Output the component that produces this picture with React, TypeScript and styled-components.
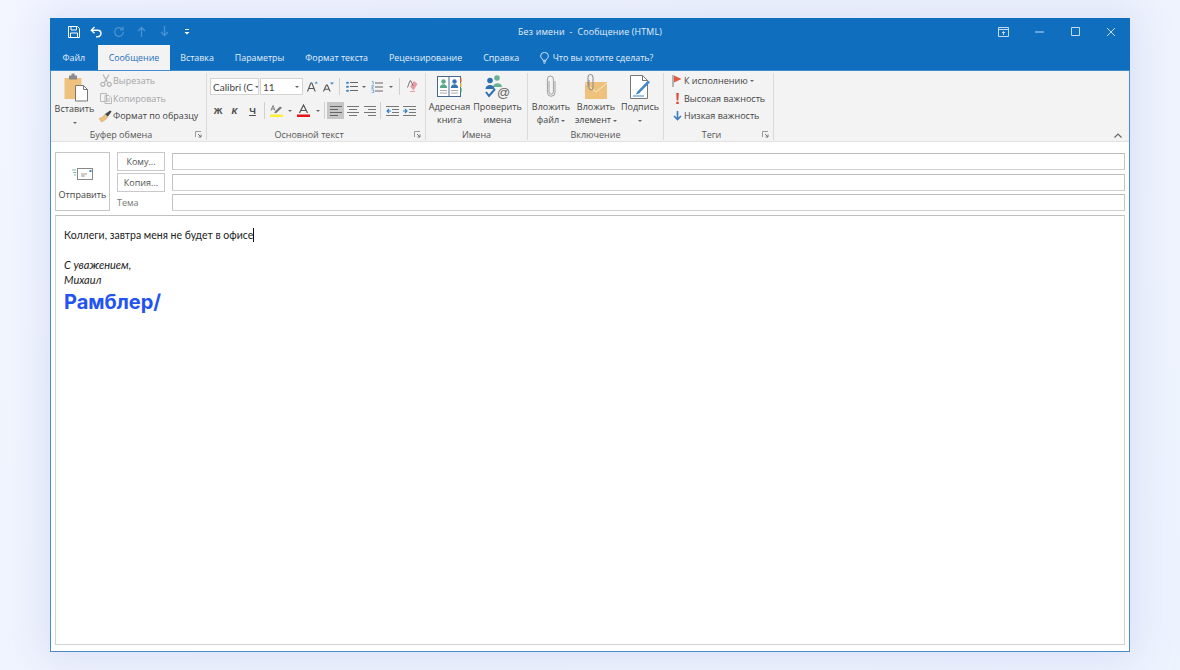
import React from "react";
import styled, { createGlobalStyle } from "styled-components";

const GlobalStyle = createGlobalStyle`
  html, body {
    margin: 0;
    padding: 0;
    height: 100%;
    background: #f0f4fe;
  }
  #root {
    height: 100%;
  }
`;

const Page = styled.div`
  width: 1180px;
  height: 670px;
  padding: 18px 50px;
  box-sizing: border-box;
  overflow: hidden;
  background: linear-gradient(135deg, #f3f6ff 0%, #eff3fd 50%, #eef3fe 100%);
  font-family: "Open Sans", "Noto Sans", sans-serif;
  font-size: 9px;
  color: #444;
`;

const Window = styled.div`
  width: 1080px;
  height: 634px;
  box-sizing: border-box;
  display: flex;
  flex-direction: column;
  background: #fff;
  border: 1px solid #4a8cc8;
  border-top: 0;
  box-shadow: 0 0 34px 6px rgba(205, 212, 244, 0.62);
`;

const TitleBar = styled.div`
  height: 27px;
  margin: 0 -1px;
  display: grid;
  grid-template-columns: 1fr auto 1fr;
  align-items: center;
  background: #106ebe;
  color: #e6f0fa;
`;

const Qat = styled.div`
  display: flex;
  align-items: center;
  padding-left: 12px;
`;

const QatBtn = styled.div<{ $w: number; $dim?: boolean }>`
  width: ${(p) => p.$w}px;
  height: 27px;
  display: flex;
  align-items: center;
  justify-content: center;
  color: ${(p) => (p.$dim ? "#4a92d2" : "#fff")};
`;

const WindowTitle = styled.div`
  font-size: 8.8px;
  white-space: pre;
  letter-spacing: 0.02em;
`;

const Controls = styled.div`
  display: flex;
  justify-content: flex-end;
  padding-right: 1px;
`;

const ControlBtn = styled.div`
  width: 36px;
  height: 27px;
  display: flex;
  align-items: center;
  justify-content: center;
  color: #c4dcf2;
`;

const TabRow = styled.div`
  height: 25px;
  margin: 0 -1px;
  padding-left: 2px;
  display: flex;
  background: #106ebe;
  font-size: 8.85px;
`;

const Tab = styled.div<{ $active?: boolean }>`
  padding: 0 10.5px;
  display: flex;
  align-items: center;
  white-space: nowrap;
  color: ${(p) => (p.$active ? "#1f6fb8" : "#e3eefa")};
  background: ${(p) => (p.$active ? "#f3f3f3" : "transparent")};
`;

const FileTab = styled(Tab)`
  padding-right: 13px;
`;

const TellMe = styled.div`
  margin-left: 10px;
  display: flex;
  align-items: center;
  gap: 4px;
  color: #e3eefa;
  white-space: nowrap;
`;

const Ribbon = styled.div`
  height: 72px;
  flex: none;
  display: flex;
  box-sizing: border-box;
  background: #f3f3f3;
  border-bottom: 1px solid #e2e2e2;
  border-top: 1px solid #3f8ccc;
  position: relative;
`;

const Group = styled.div<{ $w: number }>`
  width: ${(p) => p.$w}px;
  flex: none;
  box-sizing: border-box;
  display: flex;
  flex-direction: column;
  position: relative;
  margin: 2px 0 1px;
  border-right: 1px solid #dadada;
`;

const GroupBody = styled.div`
  flex: 1;
  display: flex;
  min-height: 0;
`;

const GroupLabel = styled.div<{ $pr?: number }>`
  height: 14px;
  line-height: 17px;
  padding-right: ${(p) => p.$pr ?? 0}px;
  text-align: center;
  color: #555;
  flex: none;
`;

const Launcher = styled.svg`
  position: absolute;
  right: 4px;
  bottom: 2px;
`;

const LargeBtn = styled.div<{ $w: number }>`
  width: ${(p) => p.$w}px;
  flex: none;
  display: flex;
  flex-direction: column;
  align-items: center;
  text-align: center;
  line-height: 13px;
  white-space: nowrap;
`;

const LargeIcon = styled.div`
  height: 28px;
  width: 100%;
  display: flex;
  align-items: center;
  justify-content: center;
`;

const PasteIcon = styled(LargeIcon)`
  height: 34px;
  padding-left: 2px;
  box-sizing: border-box;
`;

const Caret = styled.span<{ $left?: number }>`
  display: inline-block;
  width: 0;
  height: 0;
  margin-left: ${(p) => p.$left ?? 2}px;
  vertical-align: middle;
  border-left: 2px solid transparent;
  border-right: 2px solid transparent;
  border-top: 2px solid #666;
`;

const SmallCol = styled.div`
  display: flex;
  flex-direction: column;
  margin-top: -1px;
`;

const TagsCol = styled(SmallCol)`
  padding-left: 6px;
`;

const SmallBtn = styled.div<{ $dim?: boolean }>`
  height: 17.5px;
  display: flex;
  align-items: center;
  white-space: nowrap;
  color: ${(p) => (p.$dim ? "#a6a6a6" : "#444")};
`;

const SmallIcon = styled.div<{ $w: number }>`
  width: ${(p) => p.$w}px;
  height: 16px;
  flex: none;
  display: flex;
  align-items: center;
  justify-content: center;
`;

const FontCol = styled.div`
  display: flex;
  flex-direction: column;
  gap: 7px;
  padding: 5px 0 0 3px;
`;

const ToolRow = styled.div`
  height: 17px;
  display: flex;
  align-items: center;
`;

const Combo = styled.div<{ $w: number }>`
  width: ${(p) => p.$w}px;
  height: 17px;
  box-sizing: border-box;
  margin-right: 1px;
  padding: 0 3px 0 2px;
  display: flex;
  align-items: center;
  justify-content: space-between;
  background: #fff;
  border: 1px solid #d4d4d4;
  font-family: "Lato", sans-serif;
  font-size: 10px;
  overflow: hidden;
  white-space: nowrap;
`;

const Tool = styled.div<{ $w: number; $active?: boolean }>`
  width: ${(p) => p.$w}px;
  height: 17px;
  flex: none;
  display: flex;
  align-items: center;
  justify-content: center;
  background: ${(p) => (p.$active ? "#c6c6c6" : "transparent")};
  color: #444;
`;

const ToolSep = styled.div<{ $mx: number }>`
  width: 1px;
  height: 17px;
  flex: none;
  margin: 0 ${(p) => p.$mx}px;
  background: #d0d0d0;
`;

const BoldLetter = styled.span<{ $italic?: boolean; $under?: boolean }>`
  font-family: "Liberation Sans", sans-serif;
  font-size: 9.5px;
  font-weight: 700;
  font-style: ${(p) => (p.$italic ? "italic" : "normal")};
  text-decoration: ${(p) => (p.$under ? "underline" : "none")};
  color: #4a4a4a;
`;

const CollapseBtn = styled.svg`
  position: absolute;
  right: 7px;
  bottom: 3px;
`;

const Compose = styled.div`
  flex: 1;
  display: flex;
  flex-direction: column;
  padding: 10px 4px 6px;
  min-height: 0;
`;

const Header = styled.div`
  display: flex;
  align-items: flex-start;
`;

const SendBtn = styled.div`
  width: 55px;
  height: 59px;
  box-sizing: border-box;
  flex: none;
  display: flex;
  flex-direction: column;
  align-items: center;
  border: 1px solid #c6c6c6;
  color: #444;
`;

const SendIcon = styled.div`
  height: 29px;
  margin-top: 6px;
  display: flex;
  align-items: center;
`;

const Fields = styled.div`
  flex: 1;
  margin-left: 7px;
  display: grid;
  grid-template-columns: 48px 1fr;
  column-gap: 7px;
  grid-auto-rows: 17px;
  row-gap: 3.5px;
  padding-top: 1px;
`;

const AddrBtn = styled.div`
  box-sizing: border-box;
  height: 19px;
  margin-top: -1px;
  display: flex;
  align-items: center;
  justify-content: center;
  border: 1px solid #c9c9c9;
  color: #555;
`;

const SubjectLabel = styled.div`
  display: flex;
  align-items: center;
  color: #777;
`;

const Field = styled.div`
  box-sizing: border-box;
  border: 1px solid #c4c4c4;
  border-top-color: #bdbdbd;
  border-bottom-color: #d0d0d0;
  background: #fff;
`;

const Editor = styled.div`
  flex: 1;
  margin-top: 4px;
  box-sizing: border-box;
  border: 1px solid #d2d2d2;
  border-top-color: #c0c0c0;
  padding: 12px 8px;
  font-family: "Lato", sans-serif;
  font-size: 11px;
  color: #222;
`;

const Line = styled.div`
  height: 15px;
  line-height: 15px;
  font-size: 10.5px;
  white-space: nowrap;
`;

const SignLine = styled(Line)`
  font-size: 11px;
  font-style: italic;
`;

const Spacer = styled.div`
  height: 15px;
  margin-top: -1px;
`;

const Cursor = styled.span`
  display: inline-block;
  width: 1px;
  height: 14px;
  vertical-align: -3px;
  background: #111;
`;

const Logo = styled.div`
  font-family: "Inter", "Roboto", sans-serif;
  font-weight: 700;
  font-size: 20px;
  line-height: 30px;
  color: #2353f0;
`;

const launcher = (
  <Launcher width="7" height="7" viewBox="0 0 7 7">
    <path d="M.5 6V.5H6" fill="none" stroke="#9a9a9a" />
    <path d="M3 3l3 3M6 3.5V6H3.5" fill="none" stroke="#777" />
  </Launcher>
);

const App = () => (
  <Page>
    <GlobalStyle />
    <Window>
      <TitleBar>
        <Qat>
          <QatBtn $w={23}>
            <svg width="12" height="12" viewBox="0 0 12 12" fill="none" stroke="currentColor">
              <path d="M.5.5h9l2 2v9H.5z" />
              <path d="M3 .5v3.5h5.500V.5M2.500 11.500V7h7v4.500" />
            </svg>
          </QatBtn>
          <QatBtn $w={23}>
            <svg width="13" height="12" viewBox="0 0 13 12" fill="none" stroke="currentColor" strokeWidth="1.4">
              <path d="M4.500 1L1.300 4.200l3.200 3.100" />
              <path d="M1.500 4.200h6.200a3.300 3.300 0 0 1 0 6.600H6" />
            </svg>
          </QatBtn>
          <QatBtn $w={22} $dim>
            <svg width="12" height="12" viewBox="0 0 12 12" fill="none" stroke="currentColor" strokeWidth="1.3">
              <path d="M9.500 3.500A4.300 4.300 0 1 0 10.300 6" />
              <path d="M10 .8v3H7" />
            </svg>
          </QatBtn>
          <QatBtn $w={23} $dim>
            <svg width="9" height="11" viewBox="0 0 9 11" fill="none" stroke="currentColor" strokeWidth="1.3">
              <path d="M4.500 11V1.500M1 5l3.500-3.500L8 5" />
            </svg>
          </QatBtn>
          <QatBtn $w={23} $dim>
            <svg width="9" height="11" viewBox="0 0 9 11" fill="none" stroke="currentColor" strokeWidth="1.3">
              <path d="M4.500 0v9.500M1 6l3.500 3.500L8 6" />
            </svg>
          </QatBtn>
          <QatBtn $w={22}>
            <svg width="6" height="6" viewBox="0 0 6 6" fill="currentColor">
              <path d="M1 0h4v1H1zM.5 3h5L3 5.500z" />
            </svg>
          </QatBtn>
        </Qat>
        <WindowTitle>{"Без имени  -  Сообщение (HTML)"}</WindowTitle>
        <Controls>
          <ControlBtn>
            <svg width="11" height="10" viewBox="0 0 11 10" fill="none" stroke="currentColor">
              <path d="M.5.5h10v9H.5zM.5 2.500h10" />
              <path d="M5.500 8V4.500M4 6l1.500-1.500L7 6" />
            </svg>
          </ControlBtn>
          <ControlBtn>
            <svg width="9" height="2" viewBox="0 0 9 2">
              <path d="M0 1h9" stroke="currentColor" />
            </svg>
          </ControlBtn>
          <ControlBtn>
            <svg width="9" height="9" viewBox="0 0 9 9" fill="none" stroke="currentColor">
              <path d="M.5.5h8v8h-8z" />
            </svg>
          </ControlBtn>
          <ControlBtn>
            <svg width="10" height="10" viewBox="0 0 10 10" fill="none" stroke="currentColor">
              <path d="M1 1l8 8M9 1L1 9" />
            </svg>
          </ControlBtn>
        </Controls>
      </TitleBar>

      <TabRow>
        <FileTab>Файл</FileTab>
        <Tab $active>Сообщение</Tab>
        <Tab>Вставка</Tab>
        <Tab>Параметры</Tab>
        <Tab>Формат текста</Tab>
        <Tab>Рецензирование</Tab>
        <Tab>Справка</Tab>
        <TellMe>
          <svg width="9" height="12" viewBox="0 0 9 12" fill="none" stroke="currentColor" strokeWidth="0.9">
            <path d="M2.800 8.200C2.500 6.600.6 6 .6 4A3.900 3.600 0 0 1 8.400 4c0 2-1.900 2.600-2.200 4.200z" />
            <path d="M3 9.700h3M3.600 11.200h1.800" />
          </svg>
          Что вы хотите сделать?
        </TellMe>
      </TabRow>

      <Ribbon>
        <Group $w={156}>
          <GroupBody>
            <LargeBtn $w={47}>
              <PasteIcon>
                <svg width="24" height="29" viewBox="0 0 24 29">
                  <rect x="0.500" y="5" width="17" height="21" fill="#eec27d" />
                  <rect x="5" y="2.500" width="8" height="4" fill="#8a8a8a" />
                  <rect x="7.500" y="0.500" width="3" height="3" fill="#8a8a8a" />
                  <path d="M11.500 12.500h8l4 4v11.500h-12z" fill="#fff" stroke="#777" />
                  <path d="M19.500 12.500v4h4" fill="none" stroke="#777" />
                </svg>
              </PasteIcon>
              <div>Вставить</div>
              <div>
                <Caret $left={0} />
              </div>
            </LargeBtn>
            <SmallCol>
              <SmallBtn $dim>
                <SmallIcon $w={15}>
                  <svg width="12" height="13" viewBox="0 0 12 13" fill="none" stroke="#b4b4b4" strokeWidth="1.2">
                    <path d="M3 .5l4.600 8M9 .5L4.400 8.500" />
                    <circle cx="2.800" cy="10.300" r="2" />
                    <circle cx="9.200" cy="10.300" r="2" />
                  </svg>
                </SmallIcon>
                Вырезать
              </SmallBtn>
              <SmallBtn $dim>
                <SmallIcon $w={15}>
                  <svg width="12" height="12" viewBox="0 0 12 12" fill="none" stroke="#b8b8b8">
                    <path d="M.5 1.500h6v8h-6zM5 3.500h4l2.500 2.500v5.500H5z" fill="#f3f3f3" />
                    <path d="M6.500 7h3.500M6.500 9h3.500" />
                  </svg>
                </SmallIcon>
                Копировать
              </SmallBtn>
              <SmallBtn>
                <SmallIcon $w={15}>
                  <svg width="13" height="12" viewBox="0 0 13 12">
                    <path d="M0 8.500c3-.5 4.500-2 5.500-4l3 3c-1.500 2-4.500 4-6 4.500z" fill="#eec27d" stroke="#c99c57" strokeWidth="0.5" />
                    <path d="M6 4l2.800 2.800L12.600 1.500 11.200.4z" fill="#444" />
                  </svg>
                </SmallIcon>
                Формат по образцу
              </SmallBtn>
            </SmallCol>
          </GroupBody>
          <GroupLabel $pr={15}>Буфер обмена</GroupLabel>
          {launcher}
        </Group>

        <Group $w={219}>
          <GroupBody>
            <FontCol>
              <ToolRow>
                <Combo $w={49}>
                  Calibri (С
                  <Caret />
                </Combo>
                <Combo $w={43}>
                  11
                  <Caret />
                </Combo>
                <Tool $w={16}>
                  <svg width="11" height="11" viewBox="0 0 11 11">
                    <path d="M.5 10.500L3.800 2h1.100l3.300 8.500M2 7.500h4.600" fill="none" stroke="#555" strokeWidth="1.100" />
                    <path d="M7.500 2.500L9.200.5l1.700 2z" fill="#3f87c6" />
                  </svg>
                </Tool>
                <Tool $w={16}>
                  <svg width="11" height="10" viewBox="0 0 11 10">
                    <path d="M.5 9.500L3.300 3h1l2.800 6.500M1.800 7.200h4" fill="none" stroke="#555" strokeWidth="1.100" />
                    <path d="M7 .5h4L9 2.700z" fill="#3f87c6" />
                  </svg>
                </Tool>
                <ToolSep $mx={3} />
                <Tool $w={17}>
                  <svg width="12" height="11" viewBox="0 0 12 11" fill="none" stroke="#666">
                    <path d="M4 1.500h8M4 5.500h8M4 9.500h8" />
                    <path d="M.5 1h2v1.500h-2zM.5 5h2v1.500h-2zM.5 9h2v1.500h-2z" fill="#3f87c6" stroke="#3f87c6" strokeWidth="0.5" />
                  </svg>
                </Tool>
                <Tool $w={8}>
                  <Caret $left={0} />
                </Tool>
                <Tool $w={18}>
                  <svg width="12" height="12" viewBox="0 0 12 12" fill="none" stroke="#666">
                    <path d="M4 2h8M4 6h8M4 10h8" />
                    <path d="M.8 .5h1.400v3M.5 4.800h2.200L.5 7.200h2.300M.5 9h2.200v2.800H.5" stroke="#3f87c6" strokeWidth="0.7" />
                  </svg>
                </Tool>
                <Tool $w={10}>
                  <Caret $left={0} />
                </Tool>
                <ToolSep $mx={3} />
                <Tool $w={18}>
                  <svg width="11" height="13" viewBox="0 0 11 13">
                    <path d="M3.200 6.500L7 1l3.500 3-4 6.500z" fill="#e89aa6" />
                    <path d="M.5 7.500L3 .8h.9l2.200 5" fill="none" stroke="#777" />
                    <path d="M3 11.500h5" stroke="#e89aa6" />
                  </svg>
                </Tool>
              </ToolRow>
              <ToolRow>
                <Tool $w={16}>
                  <BoldLetter>Ж</BoldLetter>
                </Tool>
                <Tool $w={17}>
                  <BoldLetter $italic>К</BoldLetter>
                </Tool>
                <Tool $w={19}>
                  <BoldLetter $under>Ч</BoldLetter>
                </Tool>
                <ToolSep $mx={2} />
                <Tool $w={18}>
                  <svg width="13" height="13" viewBox="0 0 13 13">
                    <path d="M1 6.500L3 1.500l2 5M1.600 5h2.800" fill="none" stroke="#666" strokeWidth="0.8" />
                    <path d="M4 8.500l6-6 2 1.200-6 5.500z" fill="#777" />
                    <rect y="10.500" width="13" height="2.500" fill="#ffee3a" />
                  </svg>
                </Tool>
                <Tool $w={9}>
                  <Caret $left={0} />
                </Tool>
                <Tool $w={19}>
                  <svg width="13" height="13" viewBox="0 0 13 13">
                    <path d="M2.500 9L6.500 1l4 8M4 6.500h5" fill="none" stroke="#555" strokeWidth="1.200" />
                    <rect y="10.500" width="13" height="2.500" fill="#e8131b" />
                  </svg>
                </Tool>
                <Tool $w={9}>
                  <Caret $left={0} />
                </Tool>
                <ToolSep $mx={2} />
                <Tool $w={17} $active>
                  <svg width="12" height="10" viewBox="0 0 12 10" stroke="#666">
                    <path d="M0 .5h12M0 3.500h8M0 6.500h12M0 9.500h8" />
                  </svg>
                </Tool>
                <Tool $w={17}>
                  <svg width="12" height="10" viewBox="0 0 12 10" stroke="#777">
                    <path d="M0 .5h12M2 3.500h8M0 6.500h12M2 9.500h8" />
                  </svg>
                </Tool>
                <Tool $w={17}>
                  <svg width="12" height="10" viewBox="0 0 12 10" stroke="#777">
                    <path d="M0 .5h12M4 3.500h8M0 6.500h12M4 9.500h8" />
                  </svg>
                </Tool>
                <ToolSep $mx={2} />
                <Tool $w={18}>
                  <svg width="13" height="10" viewBox="0 0 13 10" fill="none">
                    <path d="M0 .5h13M6 3.500h7M6 6.500h7M0 9.500h13" stroke="#777" />
                    <path d="M5 5H.8M3 3L1 5l2 2" stroke="#2f7dc0" strokeWidth="1.100" />
                  </svg>
                </Tool>
                <Tool $w={17}>
                  <svg width="13" height="10" viewBox="0 0 13 10" fill="none">
                    <path d="M0 .5h13M6 3.500h7M6 6.500h7M0 9.500h13" stroke="#777" />
                    <path d="M0 5h4.200M2 3l2 2-2 2" stroke="#2f7dc0" strokeWidth="1.100" />
                  </svg>
                </Tool>
              </ToolRow>
            </FontCol>
          </GroupBody>
          <GroupLabel $pr={14}>Основной текст</GroupLabel>
          {launcher}
        </Group>

        <Group $w={102}>
          <GroupBody>
            <LargeBtn $w={47}>
              <LargeIcon>
                <svg width="25" height="22" viewBox="0 0 25 22">
                  <rect x="0.500" y="0.500" width="23" height="20" fill="#fff" stroke="#44698c" />
                  <path d="M12 .5v20" stroke="#44698c" />
                  <path d="M23.800 2v4" stroke="#d9662f" strokeWidth="1.500" />
                  <path d="M23.800 7v4" stroke="#e0b23c" strokeWidth="1.500" />
                  <path d="M23.800 12v4" stroke="#3f9a6c" strokeWidth="1.500" />
                  <circle cx="6.500" cy="5.500" r="2.200" fill="#55a88a" />
                  <path d="M2.800 12c0-5 7.400-5 7.400 0z" fill="#55a88a" />
                  <circle cx="17.500" cy="5.500" r="2.200" fill="#3575b5" />
                  <path d="M13.800 12c0-5 7.400-5 7.400 0z" fill="#3575b5" />
                  <path d="M3 14.500h7M3 17h7M14 14.500h7M14 17h7" stroke="#aaa" />
                </svg>
              </LargeIcon>
              <div>Адресная</div>
              <div>книга</div>
            </LargeBtn>
            <LargeBtn $w={49}>
              <LargeIcon>
                <svg width="25" height="24" viewBox="0 0 25 24">
                  <circle cx="12" cy="3" r="2.800" fill="#6bb294" />
                  <path d="M8 12c0-5 9-5 9 0z" fill="#6bb294" />
                  <circle cx="5" cy="5.500" r="2.800" fill="#2f6fb0" />
                  <path d="M0.500 14c0-5.500 9-5.500 9 0z" fill="#2f6fb0" />
                  <path d="M1 17l3 4 6-7" fill="none" stroke="#2f6fb0" strokeWidth="2" />
                  <text x="12" y="22" fontSize="13" fill="#666" fontFamily="Liberation Sans">@</text>
                </svg>
              </LargeIcon>
              <div>Проверить</div>
              <div>имена</div>
            </LargeBtn>
          </GroupBody>
          <GroupLabel>Имена</GroupLabel>
        </Group>

        <Group $w={136}>
          <GroupBody>
            <LargeBtn $w={46}>
              <LargeIcon>
                <svg width="10" height="23" viewBox="0 0 10 23" fill="none" stroke="#a0a0a0" strokeWidth="1">
                  <path d="M3 6v11a2.200 2.200 0 0 0 4.400 0V4a3 3 0 0 0-6 0v13.500a3.800 3.800 0 0 0 7.600 0V6" />
                </svg>
              </LargeIcon>
              <div>Вложить</div>
              <div>
                файл
                <Caret />
              </div>
            </LargeBtn>
            <LargeBtn $w={44}>
              <LargeIcon>
                <svg width="24" height="26" viewBox="0 0 24 26">
                  <rect x="1" y="8" width="22" height="17" fill="#eec27d" />
                  <path d="M1 9l11 9 11-9" fill="none" stroke="#fbe8c4" />
                  <path d="M5 6v8a2 2 0 0 0 4 0V3a2.500 2.500 0 0 0-5 0v10" fill="none" stroke="#888" />
                </svg>
              </LargeIcon>
              <div>Вложить</div>
              <div>
                элемент
                <Caret />
              </div>
            </LargeBtn>
            <LargeBtn $w={44}>
              <LargeIcon>
                <svg width="22" height="24" viewBox="0 0 22 24">
                  <path d="M1.500.5h12l5 5v18h-17z" fill="#fff" stroke="#777" />
                  <path d="M13.500.5v5h5" fill="none" stroke="#777" />
                  <path d="M8 17L19 5.500l2 1.800L10 18.500l-3 1z" fill="#3f87c6" />
                  <path d="M4 21h11" stroke="#3f87c6" />
                </svg>
              </LargeIcon>
              <div>Подпись</div>
              <div>
                <Caret $left={0} />
              </div>
            </LargeBtn>
          </GroupBody>
          <GroupLabel>Включение</GroupLabel>
        </Group>

        <Group $w={110}>
          <GroupBody>
            <TagsCol>
              <SmallBtn>
                <SmallIcon $w={14}>
                  <svg width="10" height="12" viewBox="0 0 10 12">
                    <path d="M1 0v12" stroke="#777" />
                    <path d="M2 .5l7.500 3.500L2 7.500z" fill="#e2593e" />
                  </svg>
                </SmallIcon>
                К исполнению
                <Caret />
              </SmallBtn>
              <SmallBtn>
                <SmallIcon $w={14}>
                  <svg width="3" height="11" viewBox="0 0 3 11" fill="#d9482f">
                    <path d="M.3 0h2.400l-.4 7.500H.7zM.3 8.800h2.400V11H.3z" />
                  </svg>
                </SmallIcon>
                Высокая важность
              </SmallBtn>
              <SmallBtn>
                <SmallIcon $w={14}>
                  <svg width="9" height="10" viewBox="0 0 9 10" fill="none" stroke="#3a7cc0" strokeWidth="1.600">
                    <path d="M4.500 0v8.500M1 5l3.500 3.500L8 5" />
                  </svg>
                </SmallIcon>
                Низкая важность
              </SmallBtn>
            </TagsCol>
          </GroupBody>
          <GroupLabel $pr={14}>Теги</GroupLabel>
          {launcher}
        </Group>

        <CollapseBtn width="8" height="5" viewBox="0 0 8 5" fill="none" stroke="#666" strokeWidth="1.200">
          <path d="M.5 4.500L4 1l3.500 3.500" />
        </CollapseBtn>
      </Ribbon>

      <Compose>
        <Header>
          <SendBtn>
            <SendIcon>
              <svg width="21" height="12" viewBox="0 0 21 12" fill="none">
                <rect x="5.500" y="0.500" width="15" height="11" fill="#fff" stroke="#888" />
                <path d="M9 6h6M9 8h4" stroke="#999" />
                <rect x="17.500" y="2" width="2" height="2" fill="#3f7fc0" />
                <path d="M0 2h4M1 4.500h3M2 7h2" stroke="#8fb0a8" />
              </svg>
            </SendIcon>
            Отправить
          </SendBtn>
          <Fields>
            <AddrBtn>Кому...</AddrBtn>
            <Field />
            <AddrBtn>Копия...</AddrBtn>
            <Field />
            <SubjectLabel>Тема</SubjectLabel>
            <Field />
          </Fields>
        </Header>
        <Editor>
          <Line>
            Коллеги, завтра меня не будет в офисе
            <Cursor />
          </Line>
          <Spacer />
          <SignLine>С уважением,</SignLine>
          <SignLine>Михаил</SignLine>
          <Logo>Рамблер/</Logo>
        </Editor>
      </Compose>
    </Window>
  </Page>
);

export default App;
